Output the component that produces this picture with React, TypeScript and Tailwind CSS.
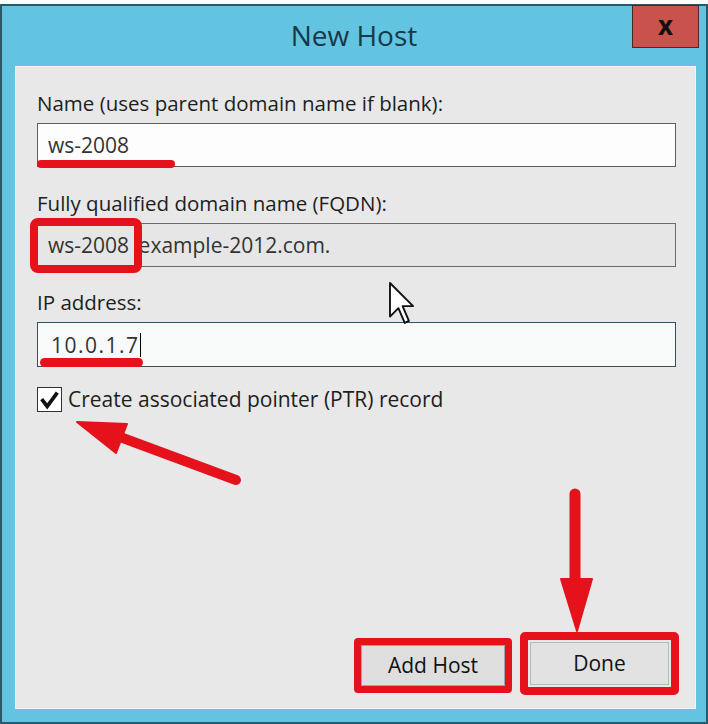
export default function App() {
  return (
    <div className="relative h-[724px] w-[708px] bg-white pt-[4px] font-['Open_Sans',sans-serif]">
      <div className="flex h-[720px] flex-col border-2 border-[#2e5867] bg-[#63c4e1]">
        {/* title bar */}
        <div className="grid h-[60px] grid-cols-[1fr_auto_1fr]">
          <div />
          <div className="pt-[10px] text-[28px] leading-[38px] text-[#15394b]">New Host</div>
          <div className="flex justify-end">
            <div className="-mt-px mr-[7px] flex h-[43px] w-[67px] items-center justify-center border border-[#4a2826] bg-[#c9524c] pb-[4px] text-[26px] font-bold leading-none text-[#111]">
              x
            </div>
          </div>
        </div>

        {/* body */}
        <div className="mb-[13px] ml-[13px] mr-[10px] flex flex-1 flex-col border border-[#f2f5f6] bg-[#e8e8e8] pl-[21px] pr-[19px] pt-[23px] text-[20.5px] text-[#1e1e1e]">
          <div className="leading-[26px]">Name (uses parent domain name if blank):</div>
          <div className="mt-[7px] flex h-[44px] items-center border border-[#5e5e5e] bg-[#fdfdfd] pl-[10px] text-[21px] leading-[26px] text-[#333]">
            ws-2008
          </div>

          <div className="mt-[23px] leading-[26px]">Fully qualified domain name (FQDN):</div>
          <div className="mt-[7px] flex h-[44px] items-center border border-[#6a6a6a] bg-[#e6e6e6] pl-[10px] text-[21px] leading-[26px] text-[#333]">
            <span>ws-2008</span>
            <span className="ml-[4px]">.example-2012.com.</span>
          </div>

          <div className="mt-[22px] leading-[26px]">IP address:</div>
          <div className="mt-[7px] flex h-[45px] items-center border border-[#3d4d57] bg-[#f8fafa] pl-[13px] text-[21px] leading-[26px] tracking-[1.5px] text-[#333] shadow-[0_-1px_0_#d4f1f7]">
            10.0.1.7
            <span className="h-[24px] w-px bg-black" />
          </div>

          <div className="mt-[19px] flex items-center gap-[6px]">
            <div className="flex h-[25px] w-[25px] items-center justify-center border border-[#333] bg-white">
              <svg width="25" height="25" viewBox="0 0 25 25">
                <path d="M4 12 L10 20 L21 5" fill="none" stroke="#111" strokeWidth="4" strokeLinejoin="miter" />
              </svg>
            </div>
            <span className="text-[21px] leading-[26px]">Create associated pointer (PTR) record</span>
          </div>

          {/* buttons */}
          <div className="-mr-[3px] mb-[13px] mt-auto flex items-end justify-end gap-[8px]">
            <div className="mb-[2px] flex h-[55px] w-[158px] rounded-[4px] border-[7px] border-[#e5121b]">
              <div className="flex flex-1 items-center justify-center border border-[#9aa6b0] bg-[#dedede] text-[21px] leading-none text-[#111]">
                Add Host
              </div>
            </div>
            <div className="flex h-[63px] w-[159px] rounded-[5px] border-[8px] border-[#e5121b] p-[2px]">
              <div className="flex flex-1 items-center justify-center border border-[#b9b9b9] bg-[#e2e2e2] text-[21px] leading-none text-[#111]">
                Done
              </div>
            </div>
          </div>
        </div>
      </div>

      {/* annotations and mouse pointer */}
      <svg className="pointer-events-none absolute inset-0" width="708" height="724" viewBox="0 0 708 724">
        <rect x="37" y="160" width="138" height="8" rx="4" fill="#e5121b" />
        <rect x="40" y="358" width="103" height="9" rx="4.5" fill="#e5121b" />
        <rect x="34" y="222" width="104" height="47" rx="4" fill="none" stroke="#e5121b" strokeWidth="8" />

        <line x1="236" y1="480" x2="112" y2="434" stroke="#e5121b" strokeWidth="10" strokeLinecap="round" />
        <polygon points="77,422 127,424 116,453" fill="#e5121b" stroke="#e5121b" strokeWidth="2" strokeLinejoin="round" />

        <line x1="575" y1="494" x2="575" y2="585" stroke="#e5121b" strokeWidth="11" strokeLinecap="round" />
        <polygon points="561,579 592,579 577,631" fill="#e5121b" stroke="#e5121b" strokeWidth="2" strokeLinejoin="round" />

        <g transform="translate(390 283) scale(2.1)">
          <path d="M0 0 L0 16 L4 12 L7 19 L9 18 L6 11 L11 11 Z" fill="#fff" stroke="#111" strokeWidth="0.9" strokeLinejoin="round" />
        </g>
      </svg>
    </div>
  )
}
